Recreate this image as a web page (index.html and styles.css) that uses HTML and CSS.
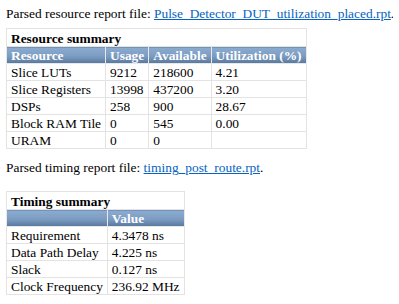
FILE: index.html
```html
<!DOCTYPE html>
<html>
<head>
<meta charset="utf-8">
<link rel="stylesheet" href="styles.css">
</head>
<body>
<p class="line">Parsed resource report file: <a href="#">Pulse_Detector_DUT_utilization_placed.rpt</a>.</p>
<table class="summary">
<tr><th class="title" colspan="4">Resource summary</th></tr>
<tr class="head"><th>Resource</th><th>Usage</th><th>Available</th><th>Utilization (%)</th></tr>
<tr><td>Slice LUTs</td><td>9212</td><td>218600</td><td>4.21</td></tr>
<tr><td>Slice Registers</td><td>13998</td><td>437200</td><td>3.20</td></tr>
<tr><td>DSPs</td><td>258</td><td>900</td><td>28.67</td></tr>
<tr><td>Block RAM Tile</td><td>0</td><td>545</td><td>0.00</td></tr>
<tr><td>URAM</td><td>0</td><td>0</td><td></td></tr>
</table>
<p class="line second">Parsed timing report file: <a href="#">timing_post_route.rpt</a>.</p>
<table class="summary timing">
<tr><th class="title" colspan="2">Timing summary</th></tr>
<tr class="head"><th></th><th>Value</th></tr>
<tr><td>Requirement</td><td>4.3478 ns</td></tr>
<tr><td>Data Path Delay</td><td>4.225 ns</td></tr>
<tr><td>Slack</td><td>0.127 ns</td></tr>
<tr><td>Clock Frequency</td><td>236.92 MHz</td></tr>
</table>
</body>
</html>
```
FILE: styles.css
```css
body {
  margin: 6px;
  font-family: "Liberation Serif", "Times New Roman", serif;
  font-size: 13.4px;
  color: #000;
  background: #fff;
}
.line {
  margin: 0;
  line-height: 15px;
  white-space: nowrap;
}
.line a {
  color: #0563c1;
  text-decoration: underline;
}
.second {
  margin-top: 11px;
}
.summary {
  border-collapse: collapse;
  margin-top: 7px;
  line-height: 15px;
}
.summary.timing {
  margin-top: 16px;
}
.summary td, .summary th {
  border: 1px solid #e3e3e3;
  padding: 1px 4px 0 4px;
  text-align: left;
  height: 15px;
  white-space: nowrap;
}
.summary .title {
  font-weight: bold;
  background: #fff;
  color: #000;
  padding-top: 1px;
  height: 16px;
}
.summary .head th {
  color: #fff;
  font-weight: bold;
  background: linear-gradient(#8cabcf 0%, #7c9cc2 55%, #57779d 100%);
  border-color: #e8e8e8;
  height: 14px;
}
```
